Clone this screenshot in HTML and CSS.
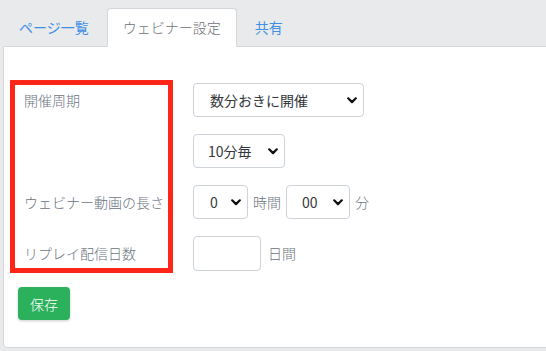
FILE: index.html
```html
<!DOCTYPE html>
<html lang="ja">
<head>
<meta charset="utf-8">
<link rel="stylesheet" href="styles.css">
</head>
<body>
<div class="page">
  <ul class="tabs">
    <li class="tab"><a href="#">ページ一覧</a></li>
    <li class="tab active"><a href="#">ウェビナー設定</a></li>
    <li class="tab"><a href="#">共有</a></li>
  </ul>
  <div class="panel">
    <div class="highlight"></div>
    <form class="form">
      <div class="label">開催周期</div>
      <div class="controls">
        <select class="sel w-171"><option>数分おきに開催</option></select>
      </div>
      <div class="label"></div>
      <div class="controls">
        <select class="sel w-92"><option>10分毎</option></select>
      </div>
      <div class="label">ウェビナー動画の長さ</div>
      <div class="controls">
        <select class="sel w-55"><option>0</option></select>
        <span class="unit">時間</span>
        <select class="sel w-64"><option>00</option></select>
        <span class="unit">分</span>
      </div>
      <div class="label">リプレイ配信日数</div>
      <div class="controls">
        <input class="num" type="text">
        <span class="unit">日間</span>
      </div>
    </form>
    <button class="save" type="button">保存</button>
  </div>
</div>
</body>
</html>
```
FILE: styles.css
```css
* { box-sizing: border-box; }
html, body { margin: 0; padding: 0; }
body {
  background: #e9eaec;
  font-family: "Noto Sans CJK JP", "Noto Sans", sans-serif;
  font-size: 14px;
  font-weight: 300;
  overflow: hidden;
  width: 546px;
  height: 351px;
}
.page {
  padding: 8px 0 0 3px;
}
.tabs {
  list-style: none;
  margin: 0;
  padding: 0;
  display: flex;
  gap: 2px;
  position: relative;
  z-index: 1;
  margin-bottom: -1px;
}
.tab {
  border: 1px solid transparent;
  border-radius: 4px 4px 0 0;
  height: 39px;
}
.tab a {
  display: block;
  padding: 0 15px;
  line-height: 37px;
  color: #3f8fe4;
  font-weight: 400;
  text-decoration: none;
}
.tab.active {
  background: #fff;
  border-color: #d4d7db #d4d7db #fff;
}
.tab.active a {
  color: #6d7177;
  font-weight: 300;
}
.panel {
  position: relative;
  background: #fff;
  border: 1px solid #d4d7db;
  border-radius: 0 0 4px 4px;
  margin-right: -4px;
  padding: 36px 14px 27px;
  height: 302px;
}
.highlight {
  position: absolute;
  left: 6px;
  top: 33px;
  width: 163px;
  height: 193px;
  border: 5px solid #fe2619;
  pointer-events: none;
}
.form {
  display: grid;
  grid-template-columns: 175px 1fr;
  grid-auto-rows: 34px;
  row-gap: 17px;
  margin: 0;
}
.label {
  padding-left: 6px;
  display: flex;
  align-items: center;
  color: #6b7380;
}
.controls {
  display: flex;
  align-items: center;
  gap: 5px;
}
.sel {
  -webkit-appearance: none;
  appearance: none;
  height: 34px;
  border: 1px solid #ced3d9;
  border-radius: 4px;
  background: #fff url("data:image/svg+xml;utf8,<svg xmlns='http://www.w3.org/2000/svg' width='10' height='7' viewBox='0 0 10 7'><path d='M1.2 1.3 L5 5.1 L8.8 1.3' fill='none' stroke='%23111' stroke-width='2.2' stroke-linecap='round' stroke-linejoin='round'/></svg>") no-repeat right 6px center;
  padding: 0 20px 0 16px;
  font-family: inherit;
  font-size: 14px;
  font-weight: 400;
  color: #33373b;
  margin: 0;
}
.w-171 { width: 171px; }
.w-92 { width: 92px; padding-left: 14px; }
.w-55 { width: 55px; }
.w-64 { width: 64px; padding-left: 15px; }
.unit {
  color: #6b7380;
}
.num {
  width: 68px;
  height: 35px;
  border: 1px solid #ced3d9;
  border-radius: 4px;
  margin: 0 2px 0 0;
  padding: 0;
}
.save {
  margin-top: 17px;
  display: block;
  width: 52px;
  height: 33px;
  border: none;
  border-radius: 4px;
  background: #2bb15c;
  color: #fff;
  font-family: inherit;
  font-size: 14px;
  font-weight: 300;
  padding: 0;
  box-shadow: 0 1px 3px rgba(0,0,0,0.2);
}
```
